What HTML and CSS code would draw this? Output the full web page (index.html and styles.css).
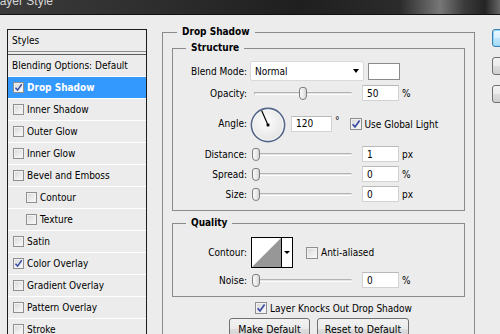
FILE: index.html
```html
<!DOCTYPE html>
<html>
<head>
<meta charset="utf-8">
<title>Layer Style</title>
<link rel="stylesheet" href="styles.css">
</head>
<body>
<div class="titlebar"><span class="title">Layer Style</span></div>
<div class="main">
  <div class="styles-panel">
    <div class="styles-head">Styles</div>
    <ul class="style-list">
      <li class="item plain">Blending Options: Default</li>
      <li class="item selected"><span class="cb sm"><svg viewBox="0 0 10 10" width="9" height="9"><path d="M1.6 5.2 L4 7.9 L8.6 1.4" fill="none" stroke="#3a4ca6" stroke-width="1.7"/></svg></span>Drop Shadow</li>
      <li class="item"><span class="cb sm"></span>Inner Shadow</li>
      <li class="item"><span class="cb sm"></span>Outer Glow</li>
      <li class="item"><span class="cb sm"></span>Inner Glow</li>
      <li class="item"><span class="cb sm"></span>Bevel and Emboss</li>
      <li class="item sub"><span class="cb sm"></span>Contour</li>
      <li class="item sub"><span class="cb sm"></span>Texture</li>
      <li class="item"><span class="cb sm"></span>Satin</li>
      <li class="item"><span class="cb sm"><svg viewBox="0 0 10 10" width="9" height="9"><path d="M1.6 5.2 L4 7.9 L8.6 1.4" fill="none" stroke="#3a4ca6" stroke-width="1.7"/></svg></span>Color Overlay</li>
      <li class="item"><span class="cb sm"></span>Gradient Overlay</li>
      <li class="item"><span class="cb sm"></span>Pattern Overlay</li>
      <li class="item"><span class="cb sm"></span>Stroke</li>
    </ul>
  </div>

  <fieldset class="group outer">
    <legend>Drop Shadow</legend>

    <fieldset class="group inner structure">
      <legend>Structure</legend>
      <div class="form">
        <div class="row r-blend">
          <span class="lbl">Blend Mode:</span>
          <div class="select"><span class="sel-text">Normal</span><span class="arrow"></span></div>
          <div class="swatch"></div>
        </div>
        <div class="row r-field r-first">
          <span class="lbl">Opacity:</span>
          <div class="slider"><div class="track"></div><div class="thumb" style="left:47px"></div></div>
          <div class="num">50</div>
          <span class="unit">%</span>
        </div>
        <div class="row r-angle">
          <span class="lbl lbl-angle">Angle:</span>
          <svg class="dial" width="36" height="36" viewBox="0 0 36 36">
            <defs>
              <radialGradient id="dialfill" cx="45%" cy="40%" r="65%">
                <stop offset="0" stop-color="#fdfdfd"/>
                <stop offset="1" stop-color="#e2e2e2"/>
              </radialGradient>
            </defs>
            <circle cx="18" cy="18" r="16.6" fill="url(#dialfill)" stroke="#55688c" stroke-width="1.6"/>
            <circle cx="18" cy="18" r="15.2" fill="none" stroke="#ffffff" stroke-width="0.8" opacity="0.8"/>
            <line x1="18" y1="18" x2="11.6" y2="3.6" stroke="#000" stroke-width="1.2"/>
            <rect x="16.6" y="16.6" width="2.8" height="2.8" fill="#000"/>
          </svg>
          <div class="num num-angle">120</div>
          <span class="deg">°</span>
          <span class="cb cb-global"><svg viewBox="0 0 10 10" width="10" height="10"><path d="M1.6 5.2 L4 7.9 L8.6 1.4" fill="none" stroke="#3a4ca6" stroke-width="1.7"/></svg></span>
          <span class="cb-label">Use Global Light</span>
        </div>
        <div class="row r-field r-dist">
          <span class="lbl">Distance:</span>
          <div class="slider"><div class="track"></div><div class="thumb" style="left:0px"></div></div>
          <div class="num">1</div>
          <span class="unit">px</span>
        </div>
        <div class="row r-field">
          <span class="lbl">Spread:</span>
          <div class="slider"><div class="track"></div><div class="thumb" style="left:0px"></div></div>
          <div class="num">0</div>
          <span class="unit">%</span>
        </div>
        <div class="row r-field">
          <span class="lbl">Size:</span>
          <div class="slider"><div class="track"></div><div class="thumb" style="left:0px"></div></div>
          <div class="num">0</div>
          <span class="unit">px</span>
        </div>
      </div>
    </fieldset>

    <fieldset class="group inner quality">
      <legend>Quality</legend>
      <div class="form form-q">
        <div class="row r-contour">
          <span class="lbl">Contour:</span>
          <div class="contour">
            <svg class="contour-img" width="29" height="29" viewBox="0 0 29 29">
              <rect width="29" height="29" fill="#ffffff"/>
              <polygon points="0,29 29,0 29,29" fill="#979797"/>
            </svg>
            <span class="contour-drop"><span class="arrow small"></span></span>
          </div>
          <span class="cb cb-aa"></span>
          <span class="cb-label">Anti-aliased</span>
        </div>
        <div class="row r-field r-noise">
          <span class="lbl">Noise:</span>
          <div class="slider"><div class="track"></div><div class="thumb" style="left:0px"></div></div>
          <div class="num">0</div>
          <span class="unit">%</span>
        </div>
      </div>
    </fieldset>

    <div class="knock">
      <span class="cb"><svg viewBox="0 0 10 10" width="10" height="10"><path d="M1.6 5.2 L4 7.9 L8.6 1.4" fill="none" stroke="#3a4ca6" stroke-width="1.7"/></svg></span>
      <span class="cb-label">Layer Knocks Out Drop Shadow</span>
    </div>
    <div class="actions">
      <div class="btn btn-make">Make Default</div>
      <div class="btn btn-reset">Reset to Default</div>
    </div>
  </fieldset>

  <div class="side">
    <div class="sbtn sbtn-default"></div>
    <div class="sbtn"></div>
    <div class="sbtn"></div>
  </div>
</div>
</body>
</html>
```

FILE: styles.css
```css
* { box-sizing: border-box; }
html, body { margin: 0; padding: 0; }
body {
  width: 500px;
  height: 334px;
  overflow: hidden;
  background: #ececec;
  font-family: "DejaVu Sans Condensed", "DejaVu Sans", sans-serif;
  font-stretch: condensed;
  font-size: 10px;
  color: #000;
}

/* title bar */
.titlebar {
  height: 15px;
  overflow: hidden;
  background: linear-gradient(90deg, #3b3b3b 0%, #2e2e2e 30%, #1f1f1f 60%, #2b2b2b 80%, #777 88%, #3a3a3a 93%, #242424 97%, #666 100%);
  border-bottom: 1px solid #111;
}
.title {
  display: block;
  margin: -5px 0 0 -7px;
  font-family: "Liberation Sans", Arial, sans-serif;
  font-stretch: normal;
  font-size: 12px;
  line-height: 12px;
  color: #d6d6d6;
}

.main { display: flex; align-items: flex-start; }

/* styles list */
.styles-panel {
  flex: none;
  width: 140px;
  height: 330px;
  margin: 14px 0 0 7px;
  border: 1px solid #1c1c1c;
}
.styles-head {
  height: 22px;
  padding-left: 4px;
  display: flex;
  align-items: center;
  border-bottom: 1px solid #8c8c8c;
}
.style-list {
  list-style: none;
  margin: 2px 0 0 0;
  padding: 0;
  border-top: 1px solid #5a5a5a;
}
.item {
  height: 22px;
  display: flex;
  align-items: center;
  padding-left: 5px;
  border-bottom: 1px solid #ffffff;
  white-space: nowrap;
}
.item.plain { padding-left: 4px; }
.item.sub { padding-left: 18px; }
.item.selected {
  background: #3399ff;
  color: #fff;
  font-weight: bold;
}
.item .cb { margin-right: 3px; }

/* checkbox */
.cb {
  flex: none;
  width: 12px;
  height: 12px;
  border: 1px solid #8e8f8f;
  background: linear-gradient(135deg, #d4d4d4 0%, #ececec 55%, #fbfbfb 100%);
  box-shadow: inset 0 0 0 1px #f3f3f3;
  display: flex;
  align-items: center;
  justify-content: center;
}
.cb.sm { width: 11px; height: 11px; }
.cb-label { margin-left: 3px; white-space: nowrap; }

/* group boxes */
.group {
  margin: 0;
  min-width: 0;
  border: 1px solid #8a8a8a;
}
.group legend {
  font-weight: bold;
  line-height: 14px;
  padding: 0 5px;
  white-space: nowrap;
}
.outer {
  flex: none;
  width: 313px;
  height: 330px;
  margin: 10px 0 0 15px;
  padding: 0 9px;
}
.outer > legend { margin-left: 5px; }
.inner { padding: 0; }
.inner > legend { margin-left: 13px; }
.structure { margin-top: 2px; }
.quality { margin-top: 5px; }

.form {
  display: flex;
  flex-direction: column;
  padding: 6px 0 8px 0;
}
.form-q { padding: 7px 0 8px 0; }

.row { display: flex; align-items: center; }
.lbl {
  flex: none;
  width: 74px;
  text-align: right;
  white-space: nowrap;
}

/* blend mode */
.r-blend { height: 20px; }
.select {
  margin-left: 3px;
  width: 114px;
  height: 20px;
  background: #fff;
  border: 1px solid #d9d9d9;
  border-radius: 2px;
  display: flex;
  align-items: center;
  justify-content: space-between;
  padding: 0 4px 0 4px;
}
.arrow {
  width: 0;
  height: 0;
  border-left: 3.5px solid transparent;
  border-right: 3.5px solid transparent;
  border-top: 4px solid #000;
}
.arrow.small {
  border-left-width: 3px;
  border-right-width: 3px;
  border-top-width: 3px;
}
.swatch {
  margin-left: 4px;
  width: 32px;
  height: 17px;
  border: 1px solid #8a8a8a;
  background: #fff;
}

/* slider rows */
.r-field { height: 16px; margin-top: 4px; }
.r-dist { margin-top: 3px; }
.slider {
  position: relative;
  margin-left: 5px;
  width: 102px;
  height: 16px;
  display: flex;
  align-items: center;
}
.track {
  flex: 1;
  margin: 1px 2px 0 2px;
  height: 3px;
  background: #e4e4e4;
  border: 1px solid #b3b3b3;
  border-bottom-color: #fdfdfd;
  border-right-color: #e6e6e6;
}
.thumb {
  position: absolute;
  top: 2px;
  width: 8px;
  height: 13px;
  border: 1px solid #7d7d7d;
  border-radius: 3px 3px 4px 4px;
  background: linear-gradient(90deg, #f9f9f9 0%, #e9e9e9 60%, #d2d2d2 100%);
}
.num {
  margin-left: 8px;
  width: 37px;
  height: 16px;
  background: #fff;
  border: 1px solid #d2d2d2;
  border-top-color: #b9b9b9;
  padding-left: 4px;
  display: flex;
  align-items: center;
}
.unit { margin-left: 3px; }

/* angle */
.r-angle { height: 36px; margin-top: 6px; }
.lbl-angle { margin-bottom: 3px; }
.dial { flex: none; margin-left: 3px; }
.num-angle { margin-left: 5px; width: 41px; margin-bottom: 3px; }
.deg { margin-left: 3px; margin-bottom: 9px; }
.cb-global { margin-left: 10px; margin-bottom: 2px; }
.r-angle .cb-label { margin-bottom: 2px; }

/* contour */
.r-contour { height: 31px; }
.contour {
  margin-left: 4px;
  width: 42px;
  height: 31px;
  border: 1px solid #000;
  display: flex;
  background: #fff;
}
.contour-img { display: block; flex: none; }
.contour-drop {
  flex: 1;
  border-left: 1px solid #000;
  display: flex;
  align-items: center;
  justify-content: center;
  background: #fff;
}
.cb-aa { margin-left: 13px; }
.r-noise { margin-top: 4px; }

/* knock out + buttons */
.knock {
  display: flex;
  align-items: center;
  height: 12px;
  margin-top: 5px;
  padding-left: 83px;
}
.actions {
  display: flex;
  gap: 7px;
  margin-top: 4px;
  padding-left: 57px;
}
.btn {
  height: 22px;
  border: 1px solid #707070;
  border-radius: 3px;
  background: linear-gradient(#f2f2f2 0%, #ebebeb 50%, #dddddd 51%, #cfcfcf 100%);
  display: flex;
  align-items: center;
  justify-content: center;
  white-space: nowrap;
  font-size: 10.5px;
}
.btn-make { width: 81px; }
.btn-reset { width: 92px; }

/* side buttons */
.side {
  flex: none;
  margin: 14px 0 0 17px;
  display: flex;
  flex-direction: column;
  gap: 10px;
}
.sbtn {
  width: 80px;
  height: 18px;
  border: 1px solid #707070;
  border-radius: 3px;
  background: linear-gradient(#f2f2f2 0%, #ebebeb 50%, #dddddd 51%, #cfcfcf 100%);
}
.sbtn-default {
  border-color: #3c7fb1;
  background: linear-gradient(#eaf6fd 0%, #d9f0fc 50%, #bee6fd 51%, #a7d9f5 100%);
  box-shadow: inset 0 0 0 1px #8fd6fb;
}
```
